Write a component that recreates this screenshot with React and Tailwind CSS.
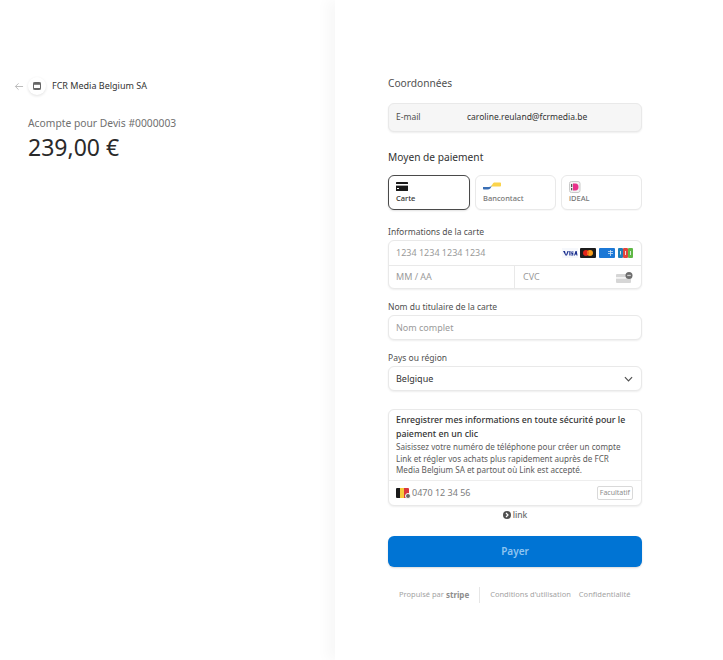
const font = { fontFamily: '"Noto Sans", sans-serif' }

function CardIcon() {
  return (
    <svg width="12" height="9" viewBox="0 0 12 9">
      <rect width="12" height="9" rx="0.5" fill="#1a1a1a" />
      <rect y="2" width="12" height="1.6" fill="#fff" />
      <rect x="1" y="6" width="2" height="1" fill="#fff" />
    </svg>
  )
}

function BancontactIcon() {
  return (
    <svg width="18" height="9" viewBox="0 0 18 9">
      <path d="M0 5h6c1.500 0 2.300-.8 3-2-.6 2.500-2 4.500-4.500 4.500H1c-.6 0-1-.4-1-1z" fill="#3a6fb5" />
      <path d="M8 4.500c1-1.300 1.500-3 3-4H17c.6 0 1 .4 1 1V3.500c0 .6-.4 1-1 1z" fill="#fbd44c" />
    </svg>
  )
}

function IdealIcon() {
  return (
    <svg width="12" height="12" viewBox="0 0 12 12">
      <rect x="0.500" y="0.500" width="10.500" height="11" rx="2" fill="#f3f3f3" stroke="#c9c9c9" />
      <path d="M4 2.500h2.500c2 0 3 1.500 3 3.500s-1 3.500-3 3.500H4z" fill="#e8308a" />
      <rect x="2" y="3" width="1.300" height="3" fill="#555" />
      <rect x="2" y="7" width="1.300" height="2.300" fill="#555" />
    </svg>
  )
}

function CardBrands() {
  return (
    <div className="flex items-center">
      <svg width="16" height="10" viewBox="0 0 16 10">
        <rect width="16" height="10" fill="#f6f8fc" />
        <path d="M1 3h2l1 4 1.500-4h1.300L5 7.500H3.500z" fill="#1a2f8f" />
        <rect x="7.300" y="3" width="1.200" height="4.500" fill="#1a2f8f" />
        <path d="M9.300 3.500h2.200v1h-1.500v.5h1.300v2.500H9.200v-1h1.200v-.6H9.300z" fill="#1a2f8f" />
        <path d="M12 7.500 13.500 3h1.200l.8 4.500h-1l-.2-1h-1l-.4 1z" fill="#1a2f8f" />
      </svg>
      <svg width="16" height="10" viewBox="0 0 16 10" className="ml-[2px]">
        <rect width="16" height="10" rx="1" fill="#1c1c1c" />
        <circle cx="6" cy="5" r="3" fill="#e2231a" />
        <circle cx="10" cy="5" r="3" fill="#f79e1b" />
        <path d="M8 2.800a3 3 0 0 1 0 4.400 3 3 0 0 1 0-4.400z" fill="#f26a1b" />
      </svg>
      <svg width="16" height="10" viewBox="0 0 16 10" className="ml-[3px]">
        <rect width="16" height="10" rx="1" fill="#1c78d6" />
        <path d="M9 3.500h5M9 5.500h5M11.500 2v6" stroke="#cfe4f8" strokeWidth="0.800" fill="none" />
      </svg>
      <svg width="15" height="10" viewBox="0 0 15 10" className="ml-[3px]">
        <rect width="5" height="10" rx="1" fill="#1f7fb8" />
        <rect x="5" width="5" height="10" rx="1" fill="#e0453c" />
        <rect x="10" width="5" height="10" rx="1" fill="#5fb846" />
        <path d="M2.500 3v3.500M7.500 3v4M12.500 3v4" stroke="#e8f3e8" strokeWidth="0.900" />
      </svg>
    </div>
  )
}

function CvcIcon() {
  return (
    <svg width="17" height="11" viewBox="0 0 17 11">
      <rect x="0" y="2" width="15" height="9" rx="1" fill="#d6d6d6" />
      <rect x="0" y="5" width="15" height="1.800" fill="#f4f4f4" />
      <circle cx="13" cy="3.500" r="3.500" fill="#6d6d6d" />
      <rect x="11.200" y="2.800" width="3.600" height="1.300" fill="#d0d0d0" />
    </svg>
  )
}

function Flag() {
  return (
    <div className="relative flex h-[10px] w-[13px] shrink-0 overflow-visible">
      <span className="w-[4px] rounded-l-[1px] bg-[#1a1a1a]" />
      <span className="w-[4px] bg-[#f5c93a]" />
      <span className="w-[5px] rounded-r-[1px] bg-[#d9363e]" />
      <span className="absolute right-[-2px] bottom-[-1px] h-[6px] w-[6px] rounded-full border border-white bg-[#666666]" />
    </div>
  )
}

function MethodTab({ icon, label, active, className }) {
  return (
    <div
      className={
        'flex h-[35px] flex-col justify-end rounded-md bg-white px-[7px] pb-[5px] ' +
        (active
          ? 'border border-[#4a4a4a] shadow-[0_1px_2px_rgba(0,0,0,0.12)] '
          : 'border border-[#e9e9e9] shadow-[0_1px_1px_rgba(0,0,0,0.03)] ') +
        className
      }
    >
      <div className="flex h-[13px] items-center">{icon}</div>
      <span className={'text-[7.500px] leading-[11px] font-medium ' + (active ? 'text-[#333333]' : 'text-[#777777]')}>
        {label}
      </span>
    </div>
  )
}

const fieldBox = 'rounded-md border border-[#e9e9e9] bg-white shadow-[0_1px_2px_rgba(0,0,0,0.07)]'
const fieldLabel = 'text-[8.500px] leading-[13px] text-[#505050]'

export default function App() {
  return (
    <div className="flex h-[660px] w-full overflow-hidden bg-white text-[#333333]" style={font}>

      {/* Summary */}
      <div className="h-full w-[335px] shrink-0 pt-[76px]">
        <div className="flex h-[20px] items-center pl-[14px]">
          <svg width="10" height="9" viewBox="0 0 11 10" fill="none" stroke="#b5b5b5" strokeWidth="1">
            <path d="M10 5H1.500M5 1.500 1.500 5 5 8.500" />
          </svg>
          <div className="ml-[4px] flex h-[18px] w-[18px] items-center justify-center rounded-full bg-white shadow-[0_1px_3px_rgba(0,0,0,0.12)]">
            <svg width="8" height="8" viewBox="0 0 8 8">
              <rect x="0.500" y="0.500" width="7" height="7" rx="0.800" fill="#fff" stroke="#666666" />
              <rect x="0.500" y="0.500" width="7" height="2.300" fill="#666666" />
              <rect x="0.500" y="6" width="7" height="1.500" fill="#666666" />
            </svg>
          </div>
          <span className="ml-[6px] text-[9px] leading-[14px] font-normal text-[#333333]">FCR Media Belgium SA</span>
        </div>
        <div className="mt-[19px] pl-[28px] text-[10.300px] leading-[16px] text-[#707070]">Acompte pour Devis #0000003</div>
        <div className="mt-[1px] pl-[28px] text-[23px] leading-[31px] font-normal text-[#2a2a2a]">239,00 €</div>
      </div>

      {/* Checkout form */}
      <div className="h-full flex-1 pl-[53px] shadow-[-8px_0_12px_rgba(0,0,0,0.03)]">
        <div className="w-[254px] pt-[76px]">
          <h2 className="text-[10.200px] leading-[15px] font-normal text-[#505050]">Coordonnées</h2>

          <div className="mt-[12px] flex h-[29px] items-center rounded-md border border-[#e9e9e9] bg-[#f6f6f6] px-[7px] text-[8.500px] text-[#505050] shadow-[0_1px_2px_rgba(0,0,0,0.07)]">
            <span className="w-[71px]">E-mail</span>
            <span className="text-[#333333]">caroline.reuland@fcrmedia.be</span>
          </div>

          <h2 className="mt-[18px] text-[10.200px] leading-[15px] font-normal text-[#333333]">Moyen de paiement</h2>

          <div className="mt-[10px] flex gap-[5px]">
            <MethodTab icon={<CardIcon />} label="Carte" active className="w-[82px]" />
            <MethodTab icon={<BancontactIcon />} label="Bancontact" className="w-[81px]" />
            <MethodTab icon={<IdealIcon />} label="iDEAL" className="w-[81px]" />
          </div>

          <div className={fieldLabel + ' mt-[15px]'}>Informations de la carte</div>
          <div className={fieldBox + ' mt-[2px] text-[9px] text-[#9a9a9a]'}>
            <div className="flex h-[24px] items-center justify-between pr-2 pl-[7px]">
              <span>1234 1234 1234 1234</span>
              <CardBrands />
            </div>
            <div className="flex h-[23px] border-t border-[#e9e9e9]">
              <div className="flex w-[126px] items-center border-r border-[#e9e9e9] pl-[7px]">MM / AA</div>
              <div className="flex flex-1 items-center justify-between pr-2 pl-2">
                <span>CVC</span>
                <CvcIcon />
              </div>
            </div>
          </div>

          <div className={fieldLabel + ' mt-[11px]'}>Nom du titulaire de la carte</div>
          <div className={fieldBox + ' mt-[2px] flex h-[25px] items-center px-[7px] text-[9px] text-[#9a9a9a]'}>Nom complet</div>

          <div className={fieldLabel + ' mt-[11px]'}>Pays ou région</div>
          <div className={fieldBox + ' mt-[2px] flex h-[25px] items-center justify-between pr-2 pl-[7px] text-[9px] text-[#333333]'}>
            <span>Belgique</span>
            <svg width="9" height="6" viewBox="0 0 10 6" fill="none" stroke="#505050" strokeWidth="1.300">
              <path d="M1 1l4 4 4-4" />
            </svg>
          </div>

          {/* Link signup */}
          <div className={fieldBox + ' mt-[18px]'}>
            <div className="px-[7px] pt-[4px] pb-[4px]">
              <div className="text-[8.800px] leading-[13.500px] font-medium text-[#333333]">
                Enregistrer mes informations en toute sécurité pour le paiement en un clic
              </div>
              <div className="text-[8.100px] leading-[11.500px] text-[#5c5c5c]">
                Saisissez votre numéro de téléphone pour créer un compte Link et régler vos achats plus rapidement auprès de FCR Media Belgium SA et partout où Link est accepté.
              </div>
            </div>
            <div className="flex h-[25px] items-center justify-between border-t border-[#eeeeee] pr-2 pl-[7px]">
              <div className="flex items-center gap-[3px] text-[9px] text-[#7d7d7d]">
                <Flag />
                <span>0470 12 34 56</span>
              </div>
              <span className="rounded-[2px] border border-[#d9d9d9] px-[2px] py-[1px] text-[7px] leading-[10px] text-[#8d8d8d]">Facultatif</span>
            </div>
          </div>

          <div className="mt-[3px] flex items-center justify-center gap-[2px] text-[8.500px] leading-[12px] font-medium text-[#6b6b6b]">
            <svg width="8" height="8" viewBox="0 0 8 8">
              <circle cx="4" cy="4" r="4" fill="#505050" />
              <path d="M3 2l2 2-2 2" stroke="#fff" strokeWidth="1.200" fill="none" />
            </svg>
            <span>link</span>
          </div>

          <button className="mt-[15px] flex h-[31px] w-full items-center justify-center rounded-md bg-[#0074d4] text-[10px] font-semibold text-[#8fc4f0] shadow-[0_1px_2px_rgba(0,0,0,0.15)]">
            Payer
          </button>

          <div className="mt-[20px] flex items-center pl-[11px] text-[7.500px] whitespace-nowrap text-[#a3a3a3]">
            <span>Propulsé par</span>
            <span className="ml-[2px] text-[8px] font-bold text-[#8d8d8d]">stripe</span>
            <span className="mx-[10px] h-[16px] w-px bg-[#e6e6e6]" />
            <span>Conditions d'utilisation</span>
            <span className="ml-[8px]">Confidentialité</span>
          </div>
        </div>
      </div>
    </div>
  )
}
